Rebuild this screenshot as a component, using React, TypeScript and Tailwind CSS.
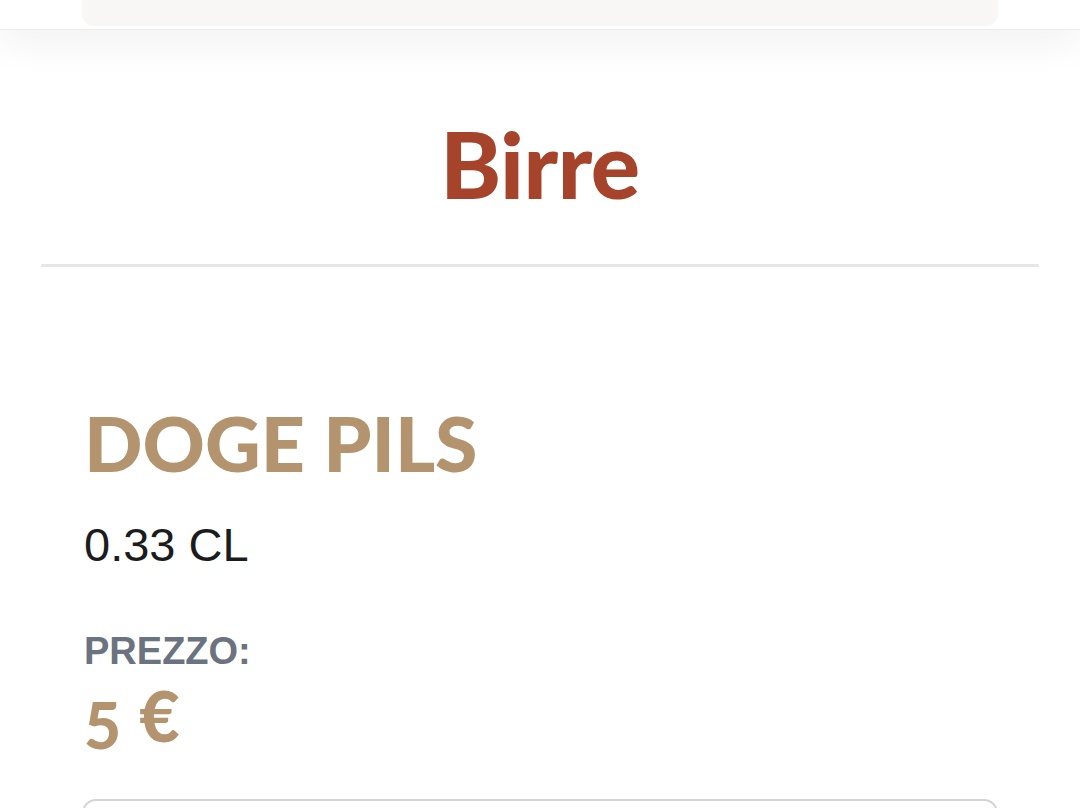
import React from "react";

export default function App() {
  return (
    <div className="w-[1080px] h-[808px] overflow-hidden bg-white relative">
      <header className="relative z-10 h-[30px] bg-white border-b border-[#ececec] shadow-[0_10px_40px_rgba(0,0,0,0.07)] px-[82px]">
        <div className="h-[26px] bg-[#f8f7f5] rounded-b-[12px]"></div>
      </header>
      <main className="flex flex-col">
        <div className="flex justify-center pt-[84px] pb-[50px]">
          <h1 className="text-[92px] leading-[100px] font-black text-[#a6432b] tracking-[-0.5px]" style={{ fontFamily: "Lato, 'Open Sans', sans-serif" }}>
            Birre
          </h1>
        </div>
        <div className="mx-[41px] h-[3px] bg-[#e6e6e6]"></div>
        <section className="px-[84px] pt-[130px]">
          <h2 className="text-[77px] leading-[90px] font-black text-[#b4946e]" style={{ fontFamily: "Lato, 'Open Sans', sans-serif" }}>
            DOGE PILS
          </h2>
          <p className="mt-[30px] text-[47px] leading-[56px] text-[#1c1c1e]" style={{ fontFamily: "'Liberation Sans', Arial, sans-serif" }}>
            0.33 CL
          </p>
          <p className="mt-[56px] text-[38px] leading-[44px] font-bold text-[#6b7280]" style={{ fontFamily: "'Liberation Sans', Arial, sans-serif" }}>
            PREZZO:
          </p>
          <p className="mt-[16px] text-[64px] leading-[72px] font-black text-[#b4946e] flex items-start gap-[18px]" style={{ fontFamily: "Lato, 'Open Sans', sans-serif" }}>
            <span>5</span>
            <span className="-mt-[10px] text-[70px]">€</span>
          </p>
        </section>
        <div className="mx-[82px] mt-[38px] h-[60px] border-2 border-[#d4d4d8] rounded-[14px]"></div>
      </main>
    </div>
  );
}
